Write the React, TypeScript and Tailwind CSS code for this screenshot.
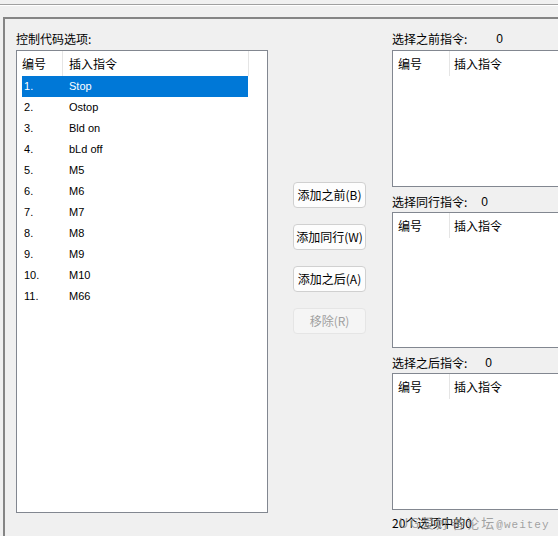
import type { ReactNode } from 'react';

const codes = ['Stop', 'Ostop', 'Bld on', 'bLd off', 'M5', 'M6', 'M7', 'M8', 'M9', 'M10', 'M66'];

const cjk = "font-['Noto_Sans_CJK_SC',sans-serif]";
const latin = "font-['Liberation_Sans','Noto_Sans_CJK_SC',sans-serif]";

function ListHeader({ firstWidth, lastBorder }: { firstWidth: string; lastBorder: boolean }): ReactNode {
  return (
    <div className={`flex h-[25px] text-[12px] leading-[25px] text-black ${cjk}`}>
      <div className={`${firstWidth} shrink-0 border-r border-[#e5e5e5] pl-[5px]`}>编号</div>
      <div
        className={
          lastBorder
            ? 'w-[186px] shrink-0 border-r border-[#e5e5e5] pl-[6px]'
            : 'min-w-0 flex-1 pl-[4px]'
        }
      >
        插入指令
      </div>
    </div>
  );
}

function CodeList(): ReactNode {
  return (
    <div className="h-[463px] border border-[#828790] bg-white">
      <ListHeader firstWidth="w-[46px]" lastBorder />
      <div className={`${latin} text-[11px] leading-[21px]`}>
        {codes.map((code, i) => (
          <div
            key={code}
            className={
              i === 0
                ? 'ml-[5px] flex h-[21px] w-[226px] bg-[#0078d7] text-white'
                : 'ml-[5px] flex h-[21px] w-[226px] text-black'
            }
          >
            <span className="w-[47px] shrink-0 pl-[2px]">{i + 1}.</span>
            <span>{code}</span>
          </div>
        ))}
      </div>
    </div>
  );
}

function ActionButton({ label, disabled }: { label: string; disabled?: boolean }): ReactNode {
  return (
    <button
      type="button"
      className={
        disabled
          ? `h-[26px] w-[73px] rounded-[4px] border border-[#e5e5e5] bg-[#f5f5f5] text-[12px] text-[#a0a0a0] ${cjk}`
          : `h-[26px] w-[73px] rounded-[4px] border border-[#d0d0d0] bg-[#fdfdfd] text-[12px] text-black ${cjk}`
      }
    >
      {label}
    </button>
  );
}

function PickedBox({ height }: { height: string }): ReactNode {
  return (
    <div className={`${height} w-[200px] border border-[#828790] bg-white`}>
      <ListHeader firstWidth="w-[57px]" lastBorder={false} />
    </div>
  );
}

export default function App(): ReactNode {
  return (
    <div className={`flex h-[536px] w-[558px] flex-col overflow-hidden bg-[#f0f0f0] ${cjk}`}>
      <div className="h-[4px] shrink-0" />
      <div className="h-px shrink-0 bg-[#a0a0a0]" />
      <div className="h-px shrink-0 bg-white" />
      <div className="ml-[3px] mt-[11px] flex flex-1 border-l-2 border-t-2 border-[#858585] pl-[11px] pt-[13px]">
        <div className="w-[252px] shrink-0">
          <div className="h-[18px] text-[12px] leading-[14px] text-black">控制代码选项:</div>
          <CodeList />
        </div>
        <div className="ml-[25px] flex w-[73px] shrink-0 flex-col gap-[16px] pt-[150px]">
          <ActionButton label="添加之前(B)" />
          <ActionButton label="添加同行(W)" />
          <ActionButton label="添加之后(A)" />
          <ActionButton label="移除(R)" disabled />
        </div>
        <div className="ml-[26px] flex w-[200px] shrink-0 flex-col text-[12px] text-black">
          <div className="flex h-[18px] leading-[14px]">
            <span>选择之前指令:</span>
            <span className={`ml-[29px] ${latin}`}>0</span>
          </div>
          <PickedBox height="h-[137px]" />
          <div className="flex h-[25px] items-end pb-[3px] leading-[14px]">
            <span>选择同行指令:</span>
            <span className={`ml-[14px] ${latin}`}>0</span>
          </div>
          <PickedBox height="h-[136px]" />
          <div className="flex h-[25px] items-end pb-[3px] leading-[14px]">
            <span>选择之后指令:</span>
            <span className={`ml-[18px] ${latin}`}>0</span>
          </div>
          <PickedBox height="h-[137px]" />
          <div className="relative h-[26px] pt-[6px] leading-[14px]">
            <span>20个选项中的0</span>
            <span className="absolute left-[7px] top-[5px] whitespace-nowrap text-[13px] leading-[16px] tracking-[2px] text-[#8c8c8c]/80">
              UG爱好者论坛<span className="font-['Liberation_Mono',monospace] text-[11px] tracking-[1px]">@weitey</span>
            </span>
          </div>
        </div>
      </div>
    </div>
  );
}
